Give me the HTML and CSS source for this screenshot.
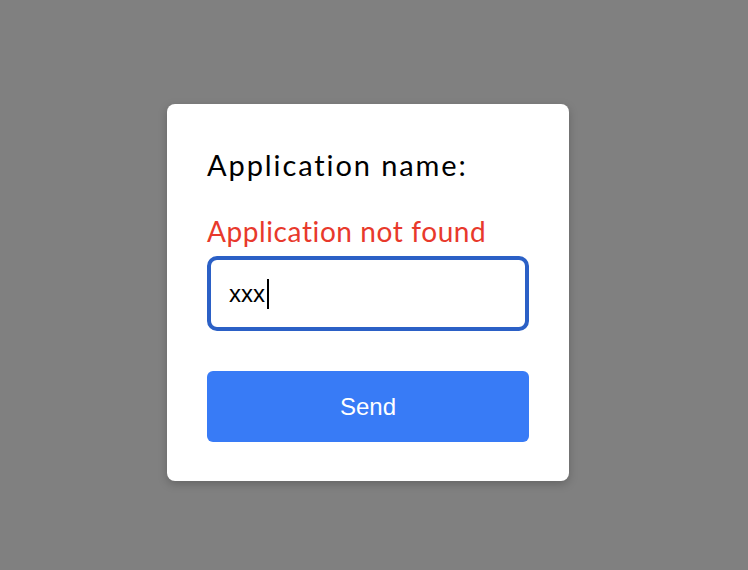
FILE: index.html
```html
<!DOCTYPE html>
<html>
<head>
<meta charset="utf-8">
<link rel="stylesheet" href="styles.css">
</head>
<body>
<div class="page">
  <form class="card">
    <div class="label">Application name:</div>
    <div class="error">Application not found</div>
    <div class="input"><span class="value">xxx</span><span class="caret"></span></div>
    <button class="send" type="button">Send</button>
  </form>
</div>
</body>
</html>
```
FILE: styles.css
```css
html, body {
  margin: 0;
  padding: 0;
  background: #808080;
}
.page {
  width: 748px;
  height: 570px;
  display: flex;
  align-items: flex-start;
  justify-content: flex-start;
  padding: 104px 0 0 167px;
  box-sizing: border-box;
}
.card {
  width: 402px;
  height: 377px;
  box-sizing: border-box;
  background: #fff;
  border-radius: 8px;
  box-shadow: 0 3px 10px rgba(0, 0, 0, 0.22);
  padding: 40px 40px 0 40px;
  display: flex;
  flex-direction: column;
}
.label {
  font-family: Lato, "Noto Sans", sans-serif;
  font-size: 29px;
  line-height: 34px;
  letter-spacing: 1.9px;
  color: #000;
  height: 34px;
  margin-top: 4px;
}
.error {
  font-family: Lato, "Noto Sans", sans-serif;
  font-size: 28px;
  line-height: 34px;
  letter-spacing: 0.6px;
  color: #e8392c;
  margin-top: 32px;
  height: 42px;
}
.input {
  height: 75px;
  box-sizing: border-box;
  border: 4px solid #2b60c6;
  border-radius: 10px;
  display: flex;
  align-items: center;
  padding-left: 18px;
  font-family: "Liberation Sans", Arial, sans-serif;
  font-size: 24px;
  color: #000;
}
.caret {
  display: inline-block;
  width: 2px;
  height: 30px;
  background: #000;
  margin-left: 2px;
}
.send {
  margin-top: 40px;
  height: 71px;
  border: none;
  border-radius: 6px;
  background: #387bf6;
  color: #fff;
  font-family: "Liberation Sans", Arial, sans-serif;
  font-size: 24px;
  padding: 0;
}
```
